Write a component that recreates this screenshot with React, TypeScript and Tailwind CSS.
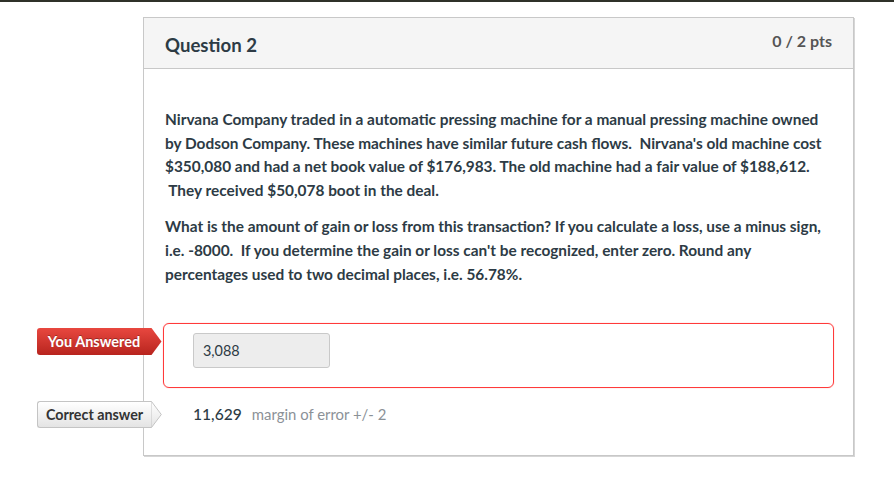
import React from "react";

function Tip({ red }: { red: boolean }) {
  return (
    <svg width="11" height="27" viewBox="0 0 11 27" className="block">
      <defs>
        <linearGradient id={red ? "tr" : "tg"} x1="0" y1="0" x2="0" y2="1">
          {red ? (
            <>
              <stop offset="0" stopColor="#e8473f" />
              <stop offset="1" stopColor="#b8241e" />
            </>
          ) : (
            <>
              <stop offset="0" stopColor="#ffffff" />
              <stop offset="1" stopColor="#e4e4e4" />
            </>
          )}
        </linearGradient>
      </defs>
      <polygon
        points={red ? "0,0 0.5,0 10.5,13.5 0.5,27 0,27" : "0,0.5 0.5,0.5 10.3,13.5 0.5,26.5 0,26.5"}
        fill={`url(#${red ? "tr" : "tg"})`}
        stroke={red ? "none" : "#c4c4c4"}
        strokeWidth="1"
      />
    </svg>
  );
}

export default function App() {
  return (
    <div
      className="w-[894px] h-[484px] bg-white border-t-2 border-[#2f3129] overflow-hidden"
      style={{ fontFamily: "Lato, 'Open Sans', sans-serif" }}
    >
      <div className="ml-[143px] mt-[15px] w-[711px] h-[439px] border border-[#c8c8c8] shadow-[1px_1px_0_#d6d6d6] bg-white">
        <div className="h-[51px] bg-[#f5f5f5] border-b border-[#c8c8c8] flex justify-between px-[21px]">
          <div className="pt-[15px] text-[18.6px] leading-[24px] font-bold text-[#2d3b45]">Question 2</div>
          <div className="pt-[13px] text-[16px] leading-[20px] font-bold text-[#555]">0 / 2 pts</div>
        </div>
        <div className="px-[21px] pt-[39px] text-[15.4px] leading-[23.6px] font-bold text-[#2d3b45] whitespace-nowrap">
          <p className="mb-[13px]">
            Nirvana Company traded in a automatic pressing machine for a manual pressing machine owned
            <br />
            by Dodson Company. These machines have similar future cash flows.&nbsp; Nirvana's old machine cost
            <br />
            $350,080 and had a net book value of $176,983. The old machine had a fair value of $188,612.
            <br />
            &nbsp;They received $50,078 boot in the deal.
          </p>
          <p>
            What is the amount of gain or loss from this transaction? If you calculate a loss, use a minus sign,
            <br />
            i.e. -8000.&nbsp; If you determine the gain or loss can't be recognized, enter zero. Round any
            <br />
            percentages used to two decimal places, i.e. 56.78%.
          </p>
        </div>
        <div className="mt-[37px] mx-[19px]">
          <div className="relative h-[65px] border border-[#ff3a3a] rounded-[6px] pt-[9px] pl-[29px] shadow-[0_0_1px_#ff8080]">
            <div className="absolute left-[-127px] top-[4px] flex">
              <div className="w-[114px] h-[27px] rounded-l-[3px] bg-gradient-to-b from-[#e8473f] to-[#b8241e] text-white text-[14.5px] font-bold leading-[27px] text-center [text-shadow:0_-1px_0_rgba(0,0,0,0.3)]">
                You Answered
              </div>
              <Tip red={true} />
            </div>
            <div className="w-[137px] h-[35px] bg-[#ededed] border border-[#c9c9c9] rounded-[3px] pl-[9px] text-[14.4px] leading-[33px] text-[#2d3b45]">
              3,088
            </div>
          </div>
          <div className="relative mt-[13px] h-[27px] flex items-center pl-[30px]">
            <div className="absolute left-[-126px] top-0 flex">
              <div className="w-[114px] h-[27px] rounded-l-[3px] border border-r-0 border-[#c4c4c4] bg-gradient-to-b from-white to-[#e4e4e4] text-[#333] text-[14.3px] font-bold leading-[25px] text-center">
                Correct answer
              </div>
              <Tip red={false} />
            </div>
            <span className="text-[#2d3b45] text-[15.6px] font-medium">11,629</span>
            <span className="ml-[10px] text-[#8b9197] text-[14.9px]">margin of error +/- 2</span>
          </div>
        </div>
      </div>
    </div>
  );
}
